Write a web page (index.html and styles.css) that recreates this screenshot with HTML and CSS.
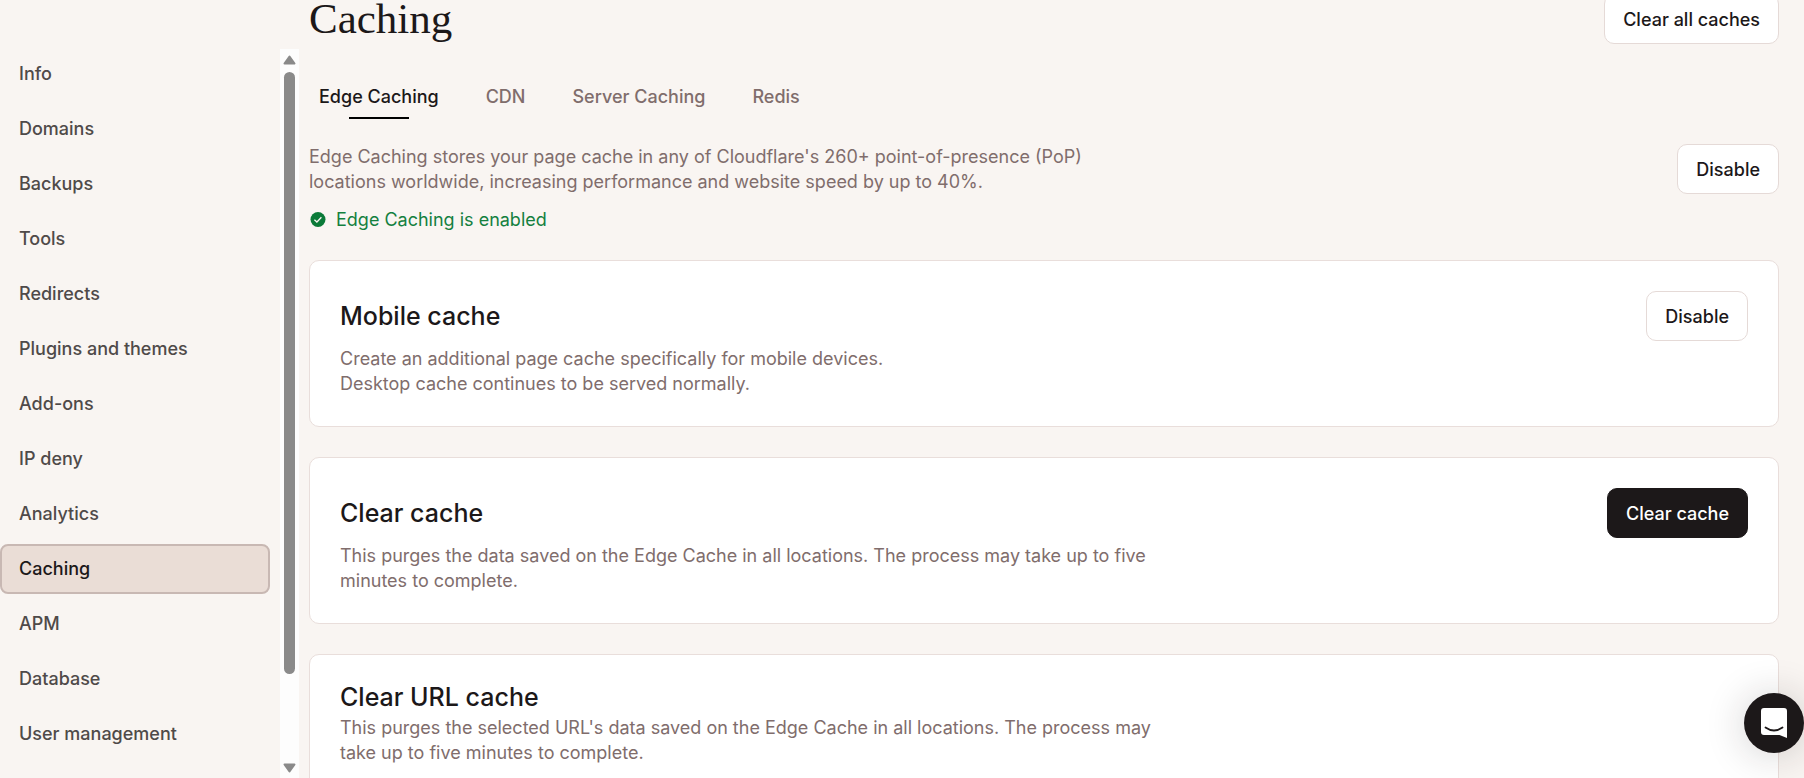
FILE: index.html
```html
<!DOCTYPE html>
<html lang="en">
<head>
  <meta charset="UTF-8">
  <meta name="viewport" content="width=device-width, initial-scale=1.0">
  <title>Caching</title>
  <link rel="stylesheet" href="styles.css">
</head>
<body>
  <div class="layout">
    <aside class="sidebar">
      <nav class="menu">
        <a href="#">Info</a>
        <a href="#">Domains</a>
        <a href="#">Backups</a>
        <a href="#">Tools</a>
        <a href="#">Redirects</a>
        <a href="#">Plugins and themes</a>
        <a href="#">Add-ons</a>
        <a href="#">IP deny</a>
        <a href="#">Analytics</a>
        <a href="#" class="active" aria-current="page">Caching</a>
        <a href="#">APM</a>
        <a href="#">Database</a>
        <a href="#">User management</a>
      </nav>
      <div class="scrollbar" aria-hidden="true">
        <svg width="13" height="10" viewBox="0 0 13 10"><path d="M6.5 1.5 11.5 8.5H1.5Z" fill="#8a8a8a" stroke="#8a8a8a" stroke-width="2" stroke-linejoin="round"/></svg>
        <div class="track"><div class="thumb"></div></div>
        <svg width="13" height="10" viewBox="0 0 13 10"><path d="M6.5 8.5 11.5 1.5H1.5Z" fill="#8a8a8a" stroke="#8a8a8a" stroke-width="2" stroke-linejoin="round"/></svg>
      </div>
    </aside>

    <main class="content">
      <header class="page-header">
        <h1>Caching</h1>
        <button class="btn">Clear all caches</button>
      </header>

      <nav class="tabs">
        <a href="#" class="tab active">Edge Caching</a>
        <a href="#" class="tab">CDN</a>
        <a href="#" class="tab">Server Caching</a>
        <a href="#" class="tab">Redis</a>
      </nav>

      <section class="intro">
        <div>
          <p class="text">Edge Caching stores your page cache in any of Cloudflare's 260+ point-of-presence (PoP) locations worldwide, increasing performance and website speed by up to 40%.</p>
          <p class="status">
            <svg width="17" height="17" viewBox="0 0 17 17"><circle cx="9" cy="8.5" r="7.5" fill="#0b7a38"/><path d="M5.4 8.7 7.9 11 12.4 6.2" fill="none" stroke="#f9f5f2" stroke-width="1.3"/></svg>
            Edge Caching is enabled
          </p>
        </div>
        <button class="btn">Disable</button>
      </section>

      <section class="card">
        <div class="card-head">
          <h2>Mobile cache</h2>
          <button class="btn">Disable</button>
        </div>
        <p class="text">Create an additional page cache specifically for mobile devices.<br>Desktop cache continues to be served normally.</p>
      </section>

      <section class="card">
        <div class="card-head">
          <h2>Clear cache</h2>
          <button class="btn dark">Clear cache</button>
        </div>
        <p class="text">This purges the data saved on the Edge Cache in all locations. The process may take up to five minutes to complete.</p>
      </section>

      <section class="card">
        <div class="card-head">
          <h2>Clear URL cache</h2>
        </div>
        <p class="text">This purges the selected URL's data saved on the Edge Cache in all locations. The process may take up to five minutes to complete.</p>
      </section>
    </main>
  </div>

  <button class="chat" aria-label="Open chat">
    <svg width="28" height="32" viewBox="0 0 28 32"><path d="M4 1H24a3 3 0 0 1 3 3V31L19.5 28H4a3 3 0 0 1-3-3V4a3 3 0 0 1 3-3Z" fill="#fff"/><path d="M5.5 20.5Q14 26.5 22.5 20.5" fill="none" stroke="#1c1819" stroke-width="1.8" stroke-linecap="round"/></svg>
  </button>
</body>
</html>
```
FILE: styles.css
```css
* {
  box-sizing: border-box;
}

body {
  margin: 0;
  height: 100vh;
  overflow: hidden;
  background-color: #f9f5f2;
  color: #1c1819;
  font-family: Inter, "Liberation Sans", sans-serif;
  font-size: 18px;
  line-height: 25px;
}

h1, h2, p {
  margin: 0;
}

a {
  color: inherit;
  text-decoration: none;
}

.layout {
  display: flex;
  height: 100%;
}

/* sidebar */
.sidebar {
  flex: 0 0 299px;
  display: flex;
  justify-content: space-between;
  padding-top: 49px;
}

.menu {
  width: 270px;
  display: flex;
  flex-direction: column;
  gap: 5px;
  overflow: hidden;
}

.menu a {
  flex: none;
  height: 50px;
  padding: 10px 17px;
  border: 2px solid transparent;
  border-radius: 8px;
  color: #4f4a49;
  font-weight: 500;
}

.menu a.active {
  background-color: #eaddd6;
  border-color: #c8b8b3;
  color: #1c1819;
}

.scrollbar {
  width: 19px;
  background-color: #fdfdfd;
  display: flex;
  flex-direction: column;
  align-items: center;
  gap: 7px;
  padding: 6px 0 5px;
}

.track {
  flex: 1;
}

.thumb {
  width: 11px;
  height: 88%;
  border-radius: 6px;
  background-color: #8a8a8a;
}

/* main column */
.content {
  flex: 1;
  padding: 0 25px 0 10px;
}

.page-header {
  display: flex;
  justify-content: space-between;
  align-items: flex-end;
  height: 44px;
}

h1 {
  font-family: "Liberation Serif", serif;
  font-size: 43px;
  font-weight: 400;
  line-height: 50px;
}

.btn {
  flex: none;
  height: 50px;
  padding: 0 18px;
  border: 1px solid #e5dad7;
  border-radius: 10px;
  background-color: #fff;
  color: #1c1819;
  font: inherit;
  font-weight: 500;
  cursor: pointer;
}

.btn.dark {
  background-color: #1c1819;
  border-color: #1c1819;
  color: #fff;
}

.tabs {
  display: flex;
  gap: 47px;
  margin: 40px 0 25px;
  padding-left: 10px;
}

.tab {
  position: relative;
  padding-bottom: 10px;
  color: #806d6c;
  font-weight: 500;
}

.tab.active {
  color: #1c1819;
}

.tab.active::after {
  content: "";
  position: absolute;
  bottom: 0;
  left: 25%;
  width: 50%;
  height: 2px;
  background-color: #000;
}

.text {
  max-width: 830px;
  color: #806d6c;
}

.intro {
  display: flex;
  justify-content: space-between;
  align-items: flex-start;
  margin-bottom: 28px;
}

.status {
  display: flex;
  align-items: center;
  gap: 10px;
  margin-top: 13px;
  color: #14803f;
}

.card {
  margin-bottom: 30px;
  padding: 30px;
  border: 1px solid #e9dedb;
  border-radius: 10px;
  background-color: #fff;
}

.card-head {
  display: flex;
  justify-content: space-between;
  align-items: center;
  margin-bottom: 5px;
}

h2 {
  font-size: 25px;
  font-weight: 500;
  line-height: 25px;
}

.chat {
  position: fixed;
  right: 0;
  bottom: 25px;
  width: 60px;
  height: 60px;
  display: flex;
  justify-content: center;
  align-items: center;
  padding: 0;
  border: none;
  border-radius: 50%;
  background-color: #1c1819;
  box-shadow: 0 2px 40px rgba(28, 24, 25, 0.2);
  cursor: pointer;
}
```
